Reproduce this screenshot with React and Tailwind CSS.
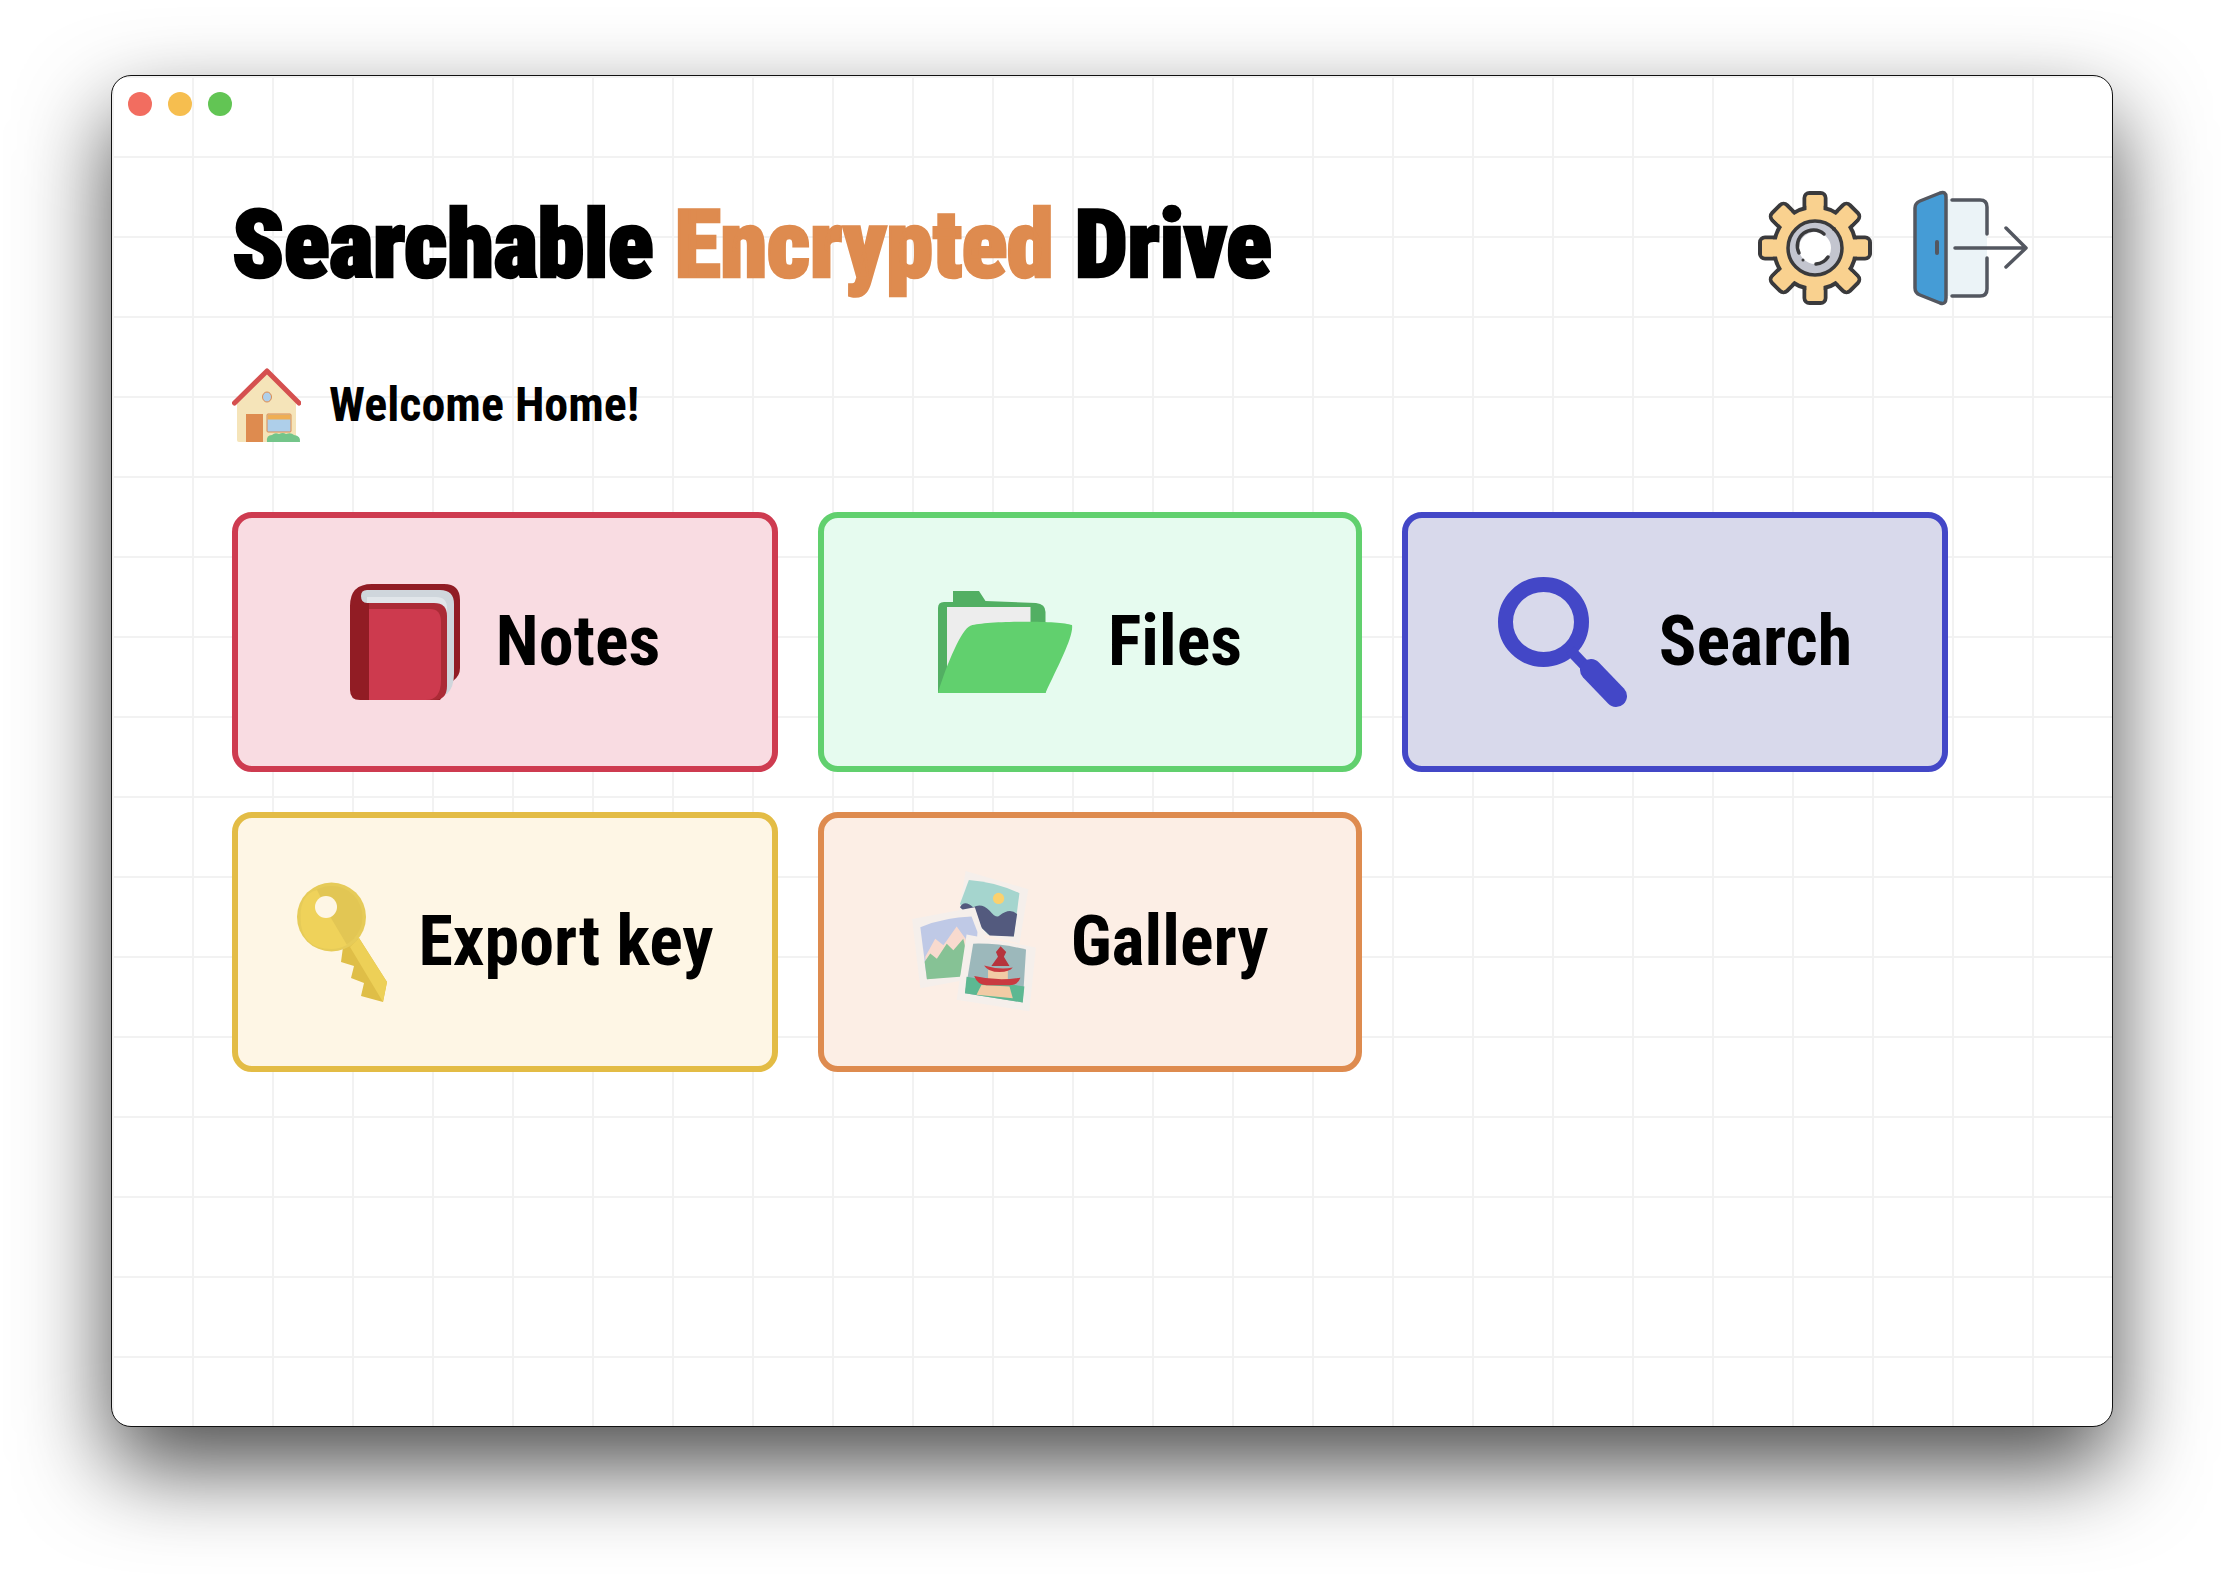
const buttons = [
  { label: 'Notes', box: 'border-[#ce3b50] bg-[#f9dce2] gap-[36px]', Icon: BookIcon },
  { label: 'Files', box: 'border-[#61d06e] bg-[#e6fbef] gap-[35px]', Icon: FolderIcon },
  { label: 'Search', box: 'border-[#4347c7] bg-[#d8d9eb] gap-[31px]', Icon: SearchIcon },
  { label: 'Export key', box: 'border-[#e3bc45] bg-[#fef6e5] gap-[32px]', Icon: KeyIcon },
  { label: 'Gallery', box: 'border-[#de8b4f] bg-[#fceee5] gap-[35px]', Icon: GalleryIcon },
]

function GearIcon() {
  const angles = [0, 45, 90, 135, 180, 225, 270, 315]
  return (
    <svg width="114" height="114" viewBox="0 0 114 114">
      {angles.map(a => (
        <rect key={a} x="46.5" y="2" width="21" height="24" rx="5" fill="#f9d18f" stroke="#3a3a3c" strokeWidth="4" transform={`rotate(${a} 57 57)`} />
      ))}
      <circle cx="57" cy="57" r="41" fill="#f9d18f" stroke="#3a3a3c" strokeWidth="4" />
      {angles.map(a => (
        <rect key={a} x="48.5" y="4" width="17" height="30" rx="3" fill="#f9d18f" transform={`rotate(${a} 57 57)`} />
      ))}
      <circle cx="57" cy="57" r="27" fill="#c3c5cf" stroke="#3a3a3c" strokeWidth="3.5" />
      <circle cx="57" cy="57" r="16" fill="#fff" />
      <path d="M41 62 A16 16 0 0 1 66 43" fill="none" stroke="#3a3a3c" strokeWidth="3.5" strokeLinecap="round" />
      <path d="M70 66 A16 16 0 0 1 58 73" fill="none" stroke="#3a3a3c" strokeWidth="3.5" strokeLinecap="round" />
      <circle cx="76" cy="38" r="2" fill="#3a3a3c" />
      <circle cx="45" cy="69" r="1.5" fill="#3a3a3c" />
    </svg>
  )
}

function DoorIcon() {
  return (
    <svg width="116" height="116" viewBox="0 0 116 116">
      <path d="M34 9 H68 Q75 9 75 16 V100 Q75 106 68 106 H34 Z" fill="#ebf3f7" />
      <path d="M40 10 H68 Q75 10 75 17 V44 M75 68 V99 Q75 106 68 106 H40" fill="none" stroke="#535760" strokeWidth="3.5" strokeLinecap="round" />
      <path d="M3 18 Q3 13 8 11 L28 3 Q34 1 34 7 V108 Q34 115 28 113 L8 105 Q3 103 3 98 Z" fill="#459cd6" stroke="#535760" strokeWidth="3.5" strokeLinejoin="round" />
      <rect x="23" y="50" width="4" height="15" rx="2" fill="#535760" />
      <path d="M43 58 H114 M94 38 L114 58 L94 77" fill="none" stroke="#535760" strokeWidth="3.5" strokeLinecap="round" strokeLinejoin="round" />
    </svg>
  )
}

function HouseIcon() {
  return (
    <svg width="69" height="74" viewBox="0 0 69 74">
      <path d="M5 34 L35 3 L64 34 V72 Q64 74 62 74 H7 Q5 74 5 72 Z" fill="#f5e4b9" />
      <path d="M2.5 35 L35 3 L67 35" fill="none" stroke="#d5504f" strokeWidth="5" strokeLinecap="round" strokeLinejoin="round" />
      <ellipse cx="35" cy="29" rx="4.5" ry="5" fill="#aecfea" stroke="#de8b4f" strokeWidth="1" />
      <rect x="14" y="46" width="17" height="28" fill="#de8b4f" />
      <rect x="35" y="46" width="24" height="18" rx="1" fill="#aecfea" stroke="#de8b4f" strokeWidth="1" />
      <rect x="35.5" y="46.5" width="23" height="5" fill="#efae54" />
      <path d="M35 74 Q34 67 40 67 Q43 64 47 66 Q51 64 54 66 Q59 64 62 67 Q69 68 68 74 Z" fill="#74c58a" />
    </svg>
  )
}

function BookIcon() {
  return (
    <svg width="110" height="116" viewBox="0 0 110 116">
      <path d="M0 22 Q0 0 22 0 H94 Q110 0 110 16 V84 Q110 92 103 97 L90 116 H10 Q0 116 0 106 Z" fill="#911c24" />
      <path d="M12 6 H90 Q104 6 104 20 V90 Q104 103 97 110 H60 V19 H17 Q11 19 11 12 Q11 6 17 6 Z" fill="#cfd6dc" />
      <path d="M17 13 H86 Q97 13 97 24 V60 H60 V19 H17 Z" fill="#e1e6ea" />
      <path d="M19 19 H84 Q97 19 97 32 V102 Q97 116 84 116 H19 Z" fill="#ab2b36" />
      <path d="M19 25 H80 Q91 25 91 38 V96 Q91 116 76 116 H19 Z" fill="#cd3a4e" />
    </svg>
  )
}

function FolderIcon() {
  return (
    <svg width="135" height="102" viewBox="0 0 135 102">
      <path d="M15 0 H41 L47.5 10 L98 12 Q107.5 13 107.5 21 V102 H0 V17 Q0 11 6 11 H15 Z" fill="#52af63" />
      <path d="M9 16 H92.5 V60 H40 L9 90 Z" fill="#ededed" />
      <path d="M0 102 C9 72 24 38 32 35 C42 30 120 29 134 34 C136 45 120 75 107.5 102 Z" fill="#61d06e" />
    </svg>
  )
}

function SearchIcon() {
  return (
    <svg width="130" height="130" viewBox="0 0 130 130">
      <ellipse cx="45.5" cy="45" rx="38" ry="37.5" fill="none" stroke="#4347c7" strokeWidth="15" />
      <path d="M72 73 L92 94" stroke="#4347c7" strokeWidth="11" />
      <path d="M93 93 L118 119" stroke="#4347c7" strokeWidth="22" strokeLinecap="round" />
    </svg>
  )
}

function KeyIcon() {
  return (
    <svg width="90" height="120" viewBox="0 0 90 120">
      <path d="M46 65 L62 56 L90 100 L86 120 L64 114 L67 101 L54 96 L57 84 L44 80 Z" fill="#dfbe47" />
      <path d="M53 65 L62 56 L90 100 L86 120 Z" fill="#edd057" />
      <circle cx="34.5" cy="35" r="34.5" fill="#e6cb58" />
      <circle cx="34.5" cy="35" r="31" fill="#e2c654" />
      <path d="M34 36 L50 63 Q42 67 34.5 67 Q3.5 67 3.5 35 Q3.5 12 20 8 Z" fill="#efd25a" />
      <ellipse cx="29" cy="25" rx="11" ry="11" fill="#fef6e5" />
    </svg>
  )
}

function GalleryIcon() {
  return (
    <svg width="124" height="142" viewBox="100 30 375 430">
      <path d="M262 30 L452 85 L425 250 L235 200 Z" fill="#f5efeb" />
      <path d="M272 57 Q350 62 425 97 L408 228 L330 222 L245 130 Z" fill="#a5d5ce" />
      <circle cx="362" cy="113" r="17" fill="#fbd16e" />
      <path d="M245 140 Q258 115 285 140 Q310 125 335 150 Q355 175 365 165 Q395 140 418 160 L408 228 L335 225 Z" fill="#535a7e" />
      <path d="M100 175 L290 140 L320 230 L315 350 L125 385 Z" fill="#f5efeb" />
      <path d="M125 200 Q200 170 280 168 L298 215 L290 340 L145 358 Z" fill="#bfc9e6" />
      <path d="M140 290 L170 235 L195 255 L235 198 L262 235 L290 340 L145 358 Z" fill="#f8dace" />
      <path d="M138 305 L155 280 L175 296 L205 250 L225 270 L255 235 L270 300 L245 350 L145 358 Z" fill="#86c295" />
      <path d="M265 222 L475 262 L455 455 L235 420 Z" fill="#f5efeb" />
      <path d="M285 250 Q370 248 445 268 L435 428 L260 400 Z" fill="#9cb8bb" />
      <path d="M265 350 L440 380 L435 428 L260 400 Z" fill="#5db892" />
      <path d="M310 375 L395 380 L405 415 L295 405 Z" fill="#f2cba5" />
      <path d="M330 330 H390 V360 H330 Z" fill="#f2cba5" />
      <path d="M288 348 Q360 365 428 353 Q420 378 390 376 H325 Q298 375 288 348 Z" fill="#c93a40" />
      <path d="M318 316 Q365 330 405 322 Q395 335 365 336 Q330 336 318 316 Z" fill="#c93a40" />
      <path d="M368 258 L385 275 L378 290 L395 318 H340 L360 290 L354 275 Z" fill="#b6343d" />
    </svg>
  )
}

export default function App() {
  return (
    <div className="w-[2224px] h-[1574px] bg-white overflow-hidden pt-[75px] pl-[111px] font-['Roboto',sans-serif] text-black">
      <div className="w-[2002px] h-[1352px] border border-[#111] rounded-[20px] shadow-[0_40px_90px_rgba(0,0,0,0.7)] bg-white bg-[linear-gradient(#f2f2f2_2px,transparent_2px),linear-gradient(90deg,#f2f2f2_2px,transparent_2px)] bg-[size:80px_80px]">
        {/* traffic lights */}
        <div className="flex gap-4 pt-4 pl-4">
          <div className="w-6 h-6 rounded-full bg-[#f26d60]" />
          <div className="w-6 h-6 rounded-full bg-[#f6be4f]" />
          <div className="w-6 h-6 rounded-full bg-[#62c554]" />
        </div>

        <div className="pl-[120px] pr-[84px]">
          <div className="flex items-center justify-between mt-[74px] h-[115px]">
            <h1 className="text-[95px] leading-none font-black tracking-[-0.6px] pb-[6px] [font-stretch:75%] [-webkit-text-stroke:2.5px_black] whitespace-nowrap">
              Searchable <span className="text-[#de8b4f] [-webkit-text-stroke:2.5px_#de8b4f]">Encrypted</span> Drive
            </h1>
            <div className="flex items-center gap-10">
              <GearIcon />
              <DoorIcon />
            </div>
          </div>

          <div className="flex items-center gap-7 mt-[63px] h-[74px]">
            <HouseIcon />
            <span className="text-[48px] font-bold [font-stretch:75%]">Welcome Home!</span>
          </div>

          <div className="grid grid-cols-[546px_544px_546px] gap-10 auto-rows-[260px] mt-[70px]">
            {buttons.map(({ label, box, Icon }) => (
              <button key={label} className={`flex items-center justify-center border-[6px] rounded-[20px] ${box}`}>
                <Icon />
                <span className="text-[70px] font-bold pb-[2px] [font-stretch:75%] whitespace-nowrap">{label}</span>
              </button>
            ))}
          </div>
        </div>
      </div>
    </div>
  )
}
